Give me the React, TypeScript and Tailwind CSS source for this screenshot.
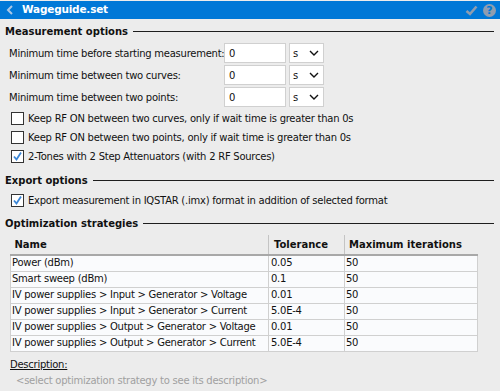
import { ReactNode } from "react";

const font = "font-['DejaVu_Sans',sans-serif]";

function SectionTitle({ title }: { title: string }) {
  return (
    <div className="flex items-center h-[14px] pl-[5px] pr-[6px] gap-[5px]">
      <span className="text-[10px] font-bold tracking-normal text-[#111] whitespace-nowrap">{title}</span>
      <div className="flex-1 h-px bg-[#1e1e1e]" />
    </div>
  );
}

function TimeRow({ label }: { label: string }) {
  return (
    <div className="flex items-center h-[20px] mb-[2px] pl-[9px]">
      <span className="w-[215px] whitespace-nowrap">{label}</span>
      <div className="w-[62px] h-[20px] bg-white border border-[#d0d0d0] flex items-center px-[4px]">0</div>
      <div className="ml-[3px] w-[35px] h-[20px] bg-white border border-[#d0d0d0] flex items-center justify-between pl-[3px] pr-[4px]">
        <span>s</span>
        <svg width="10" height="6" viewBox="0 0 10 6">
          <path d="M1 1 L5 5 L9 1" fill="none" stroke="#111" strokeWidth="1.4" />
        </svg>
      </div>
    </div>
  );
}

function Check({ checked, children }: { checked?: boolean; children: ReactNode }) {
  return (
    <div className="flex items-center h-[19px] pl-[11px]">
      <div className="w-[13px] h-[13px] bg-white border border-[#333] flex items-center justify-center">
        {checked && (
          <svg width="11" height="11" viewBox="0 0 11 11">
            <path d="M2 5.5 L4.5 8.5 L9 1.5" fill="none" stroke="#3b86d6" strokeWidth="1.8" />
          </svg>
        )}
      </div>
      <span className="ml-[4px] whitespace-nowrap">{children}</span>
    </div>
  );
}

const strategies = [
  { name: "Power (dBm)", tol: "0.05", max: "50" },
  { name: "Smart sweep (dBm)", tol: "0.1", max: "50" },
  { name: "IV power supplies > Input > Generator > Voltage", tol: "0.01", max: "50" },
  { name: "IV power supplies > Input > Generator > Current", tol: "5.0E-4", max: "50" },
  { name: "IV power supplies > Output > Generator > Voltage", tol: "0.01", max: "50" },
  { name: "IV power supplies > Output > Generator > Current", tol: "5.0E-4", max: "50" },
];

export default function App() {
  return (
    <div className={`w-[500px] h-[391px] bg-[#ececec] text-[10px] tracking-[-0.25px] text-[#111] overflow-hidden ${font}`}>
      {/* Title bar */}
      <div className="mt-px h-[18px] bg-[#0078d7] flex items-center">
        <svg className="ml-[6px]" width="8" height="10" viewBox="0 0 8 10">
          <path d="M6 1 L2 5 L6 9" fill="none" stroke="#a9c7e6" strokeWidth="2" />
        </svg>
        <span className="ml-[8px] text-[10.5px] tracking-[-0.2px] font-bold text-white">Wageguide.set</span>
        <div className="ml-auto flex items-center gap-[5px] pr-[4px]">
          <svg width="13" height="11" viewBox="0 0 13 11">
            <path d="M1.5 6 L5 9 L11.5 1.5" fill="none" stroke="#8e9db0" strokeWidth="2.6" />
          </svg>
          <span className="w-[13px] h-[13px] rounded-full bg-[#8e9db0] text-[#0078d7] text-[11px] font-bold flex items-center justify-center leading-none tracking-normal">
            ?
          </span>
        </div>
      </div>

      {/* Measurement options */}
      <div className="mt-[5px]">
        <SectionTitle title="Measurement options" />
      </div>
      <div className="mt-[5px]">
        <TimeRow label="Minimum time before starting measurement:" />
        <TimeRow label="Minimum time between two curves:" />
        <TimeRow label="Minimum time between two points:" />
      </div>
      <div className="mt-[1px]">
        <Check>Keep RF ON between two curves, only if wait time is greater than 0s</Check>
        <Check>Keep RF ON between two points, only if wait time is greater than 0s</Check>
        <Check checked>2-Tones with 2 Step Attenuators (with 2 RF Sources)</Check>
      </div>

      {/* Export options */}
      <div className="mt-[7px]">
        <SectionTitle title="Export options" />
      </div>
      <div className="mt-[4px]">
        <Check checked>Export measurement in IQSTAR (.imx) format in addition of selected format</Check>
      </div>

      {/* Optimization strategies */}
      <div className="mt-[6px]">
        <SectionTitle title="Optimization strategies" />
      </div>
      <div className="mt-[5px] ml-[10px] w-[467px]">
        <table className="w-full table-fixed border-collapse">
          <colgroup>
            <col className="w-[258px]" />
            <col className="w-[76px]" />
            <col className="w-[133px]" />
          </colgroup>
          <thead>
            <tr className="h-[20px] border-b-2 border-[#a8a8a8] tracking-normal">
              <th className="text-left font-bold pl-[4px]">Name</th>
              <th className="text-left font-bold pl-[5px] border-l border-[#c4c4c4]">Tolerance</th>
              <th className="text-left font-bold pl-[4px] border-l border-[#c4c4c4]">Maximum iterations</th>
            </tr>
          </thead>
          <tbody>
            {strategies.map((s, i) => (
              <tr key={i} className="h-[16px] bg-[#fafbfd]">
                <td className="border border-[#d0d0d0] pl-px whitespace-nowrap overflow-hidden leading-[14px]">{s.name}</td>
                <td className="border border-[#d0d0d0] pl-[2px] leading-[14px]">{s.tol}</td>
                <td className="border border-[#d0d0d0] pl-px leading-[14px]">{s.max}</td>
              </tr>
            ))}
          </tbody>
        </table>
      </div>

      {/* Description */}
      <div className="mt-[6px] pl-[10px] h-[14px] flex items-center">
        <span className="underline">Description:</span>
      </div>
      <div className="mt-[2px] pl-[16px] h-[14px] flex items-center text-[#a0a0a0]">
        &lt;select optimization strategy to see its description&gt;
      </div>
    </div>
  );
}
